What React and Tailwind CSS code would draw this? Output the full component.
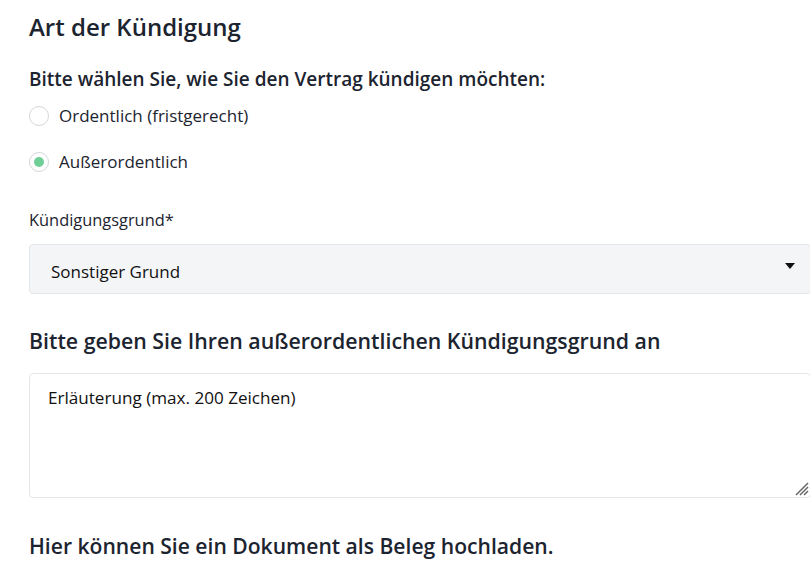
export default function App() {
  return (
    <div
      className="min-h-[568px] overflow-hidden bg-white pl-[29px] text-[#1c2430]"
      style={{ fontFamily: '"Open Sans", "Noto Sans", sans-serif' }}
    >
      <div className="w-[782px] pt-[11px]">
        <h2 className="text-[24px] font-semibold leading-[32px]">Art der Kündigung</h2>

        <p className="mt-[23px] text-[19px] font-semibold leading-[26px]">
          Bitte wählen Sie, wie Sie den Vertrag kündigen möchten:
        </p>

        <div className="mt-[12px] flex flex-col gap-[22px]">
          <label className="flex items-center gap-[10px]">
            <span className="h-[20px] w-[20px] rounded-full border border-[#d4d7dc] bg-white" />
            <span className="text-[17px] font-medium leading-[24px]">Ordentlich (fristgerecht)</span>
          </label>
          <label className="flex items-center gap-[10px]">
            <span className="flex h-[20px] w-[20px] items-center justify-center rounded-full border border-[#d4d7dc] bg-white">
              <span className="h-[10px] w-[10px] rounded-full bg-[#6fcf97]" />
            </span>
            <span className="text-[17px] font-medium leading-[24px]">Außerordentlich</span>
          </label>
        </div>

        <p className="mt-[34px] text-[16.4px] font-medium leading-[24px]">Kündigungsgrund*</p>

        <div className="mt-[12px] flex h-[50px] items-center justify-between rounded-[4px] border border-[#e3e6ea] bg-[#f4f5f7] pl-[21px] pr-[15px]">
          <span className="pt-[5px] text-[17px] font-medium text-[#111]">Sonstiger Grund</span>
          <svg width="10" height="6" viewBox="0 0 10 6" className="-mt-[6px]">
            <path d="M0 0h10L5 6z" fill="#111" />
          </svg>
        </div>

        <h3 className="mt-[33px] text-[21.3px] font-semibold leading-[28px]">
          Bitte geben Sie Ihren außerordentlichen Kündigungsgrund an
        </h3>

        <div className="relative mt-[18px] h-[125px] rounded-[4px] border border-[#e3e6ea] bg-white px-[18px] pt-[12px]">
          <span className="text-[17.1px] font-medium leading-[24px] text-[#111]">Erläuterung (max. 200 Zeichen)</span>
          <svg width="15" height="15" viewBox="0 0 15 15" className="absolute bottom-[1px] right-[1px]">
            <path d="M14 2L2 14M14 6L6 14M14 10L10 14" stroke="#666" strokeWidth="1.5" />
          </svg>
        </div>

        <h3 className="mt-[34px] text-[21.1px] font-semibold leading-[28px]">
          Hier können Sie ein Dokument als Beleg hochladen.
        </h3>
      </div>
    </div>
  )
}
